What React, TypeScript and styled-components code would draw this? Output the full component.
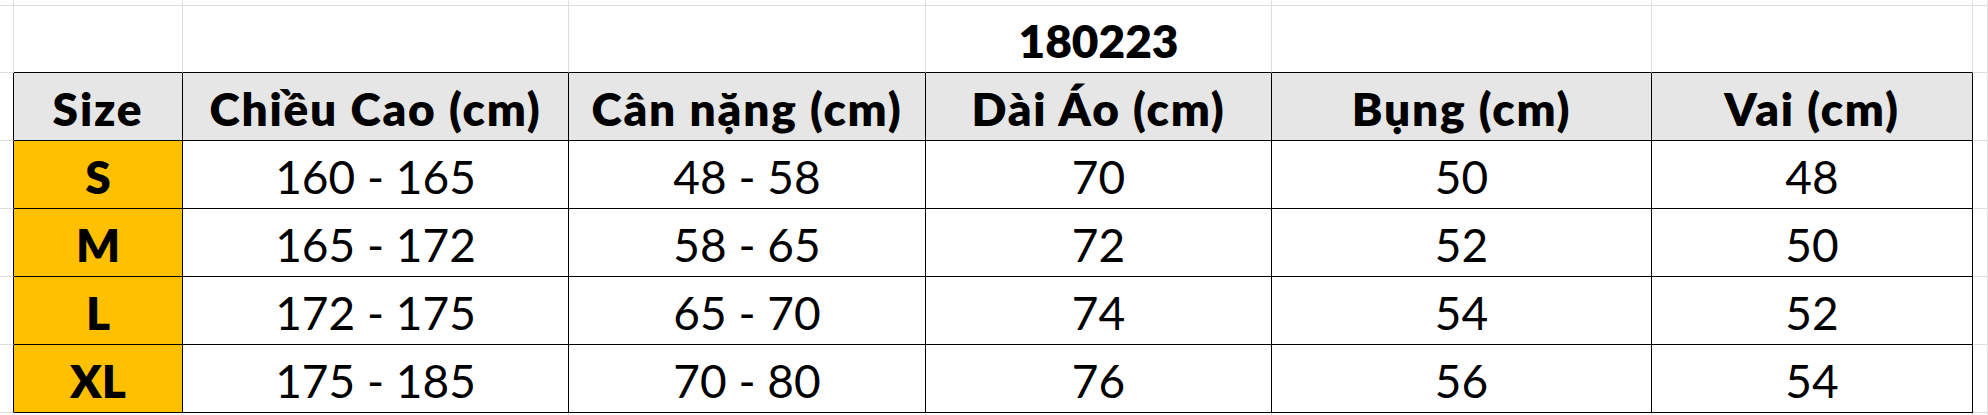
import React from "react";
import styled, { createGlobalStyle } from "styled-components";

const GlobalStyle = createGlobalStyle`
  html, body {
    margin: 0;
    padding: 0;
    background: #ffffff;
  }
  body {
    font-family: Lato, "Open Sans", "Liberation Sans", sans-serif;
  }
`;

const GRID = "#dedede";
const LINE = "#000000";

const Sheet = styled.div`
  display: grid;
  grid-template-columns: 14px 169px 386px 357px 346px 380px 321px 15px;
  grid-template-rows: 5px 68px 68px 68px 68px 68px 68px 10px;
  width: 1988px;
  height: 415px;
  overflow: hidden;
  background: #ffffff;
`;

type CellProps = {
  $right?: boolean;
  $bottom?: boolean;
  $fill?: string;
  $bold?: boolean;
  $spaced?: boolean;
};

const Cell = styled.div<CellProps>`
  box-sizing: border-box;
  display: flex;
  align-items: center;
  justify-content: center;
  padding-top: 5px;
  border-right: 1px solid ${({ $right }) => ($right ? LINE : GRID)};
  border-bottom: 1px solid ${({ $bottom }) => ($bottom ? LINE : GRID)};
  background: ${({ $fill }) => $fill || "transparent"};
  font-family: Lato, "Open Sans", "Liberation Sans", sans-serif;
  font-size: 46px;
  font-weight: ${({ $bold }) => ($bold ? 800 : 400)};
  letter-spacing: ${({ $spaced }) => ($spaced ? "1.8px" : "0")};
  color: #000000;
  white-space: nowrap;
  line-height: 1.2;
`;

const headers = [
  "Size",
  "Chiều Cao (cm)",
  "Cân nặng (cm)",
  "Dài Áo (cm)",
  "Bụng (cm)",
  "Vai (cm)",
];

const rows = [
  ["S", "160 - 165", "48 - 58", "70", "50", "48"],
  ["M", "165 - 172", "58 - 65", "72", "52", "50"],
  ["L", "172 - 175", "65 - 70", "74", "54", "52"],
  ["XL", "175 - 185", "70 - 80", "76", "56", "54"],
];

const COLS = 8;

const App = () => {
  const cells: React.ReactNode[] = [];

  // row above the sheet's first visible line
  for (let c = 0; c < COLS; c++) cells.push(<Cell key={`top-${c}`} />);

  // title row
  for (let c = 0; c < COLS; c++) {
    const inTable = c >= 1 && c <= 6;
    cells.push(
      <Cell key={`title-${c}`} $bottom={inTable} $bold>
        {c === 4 ? "180223" : null}
      </Cell>
    );
  }

  const body = [headers, ...rows];
  body.forEach((row, r) => {
    cells.push(<Cell key={`r${r}-lead`} $right />);
    row.forEach((text, c) => {
      const isHeader = r === 0;
      const isSize = c === 0 && !isHeader;
      cells.push(
        <Cell
          key={`r${r}-c${c}`}
          $right
          $bottom
          $bold={isHeader || isSize}
          $spaced={isHeader}
          $fill={isHeader ? "#e7e6e6" : isSize ? "#ffc000" : undefined}
        >
          {text}
        </Cell>
      );
    });
    cells.push(<Cell key={`r${r}-tail`} />);
  });

  // row below the table
  for (let c = 0; c < COLS; c++) cells.push(<Cell key={`bottom-${c}`} />);

  return (
    <>
      <GlobalStyle />
      <Sheet>{cells}</Sheet>
    </>
  );
};

export default App;
